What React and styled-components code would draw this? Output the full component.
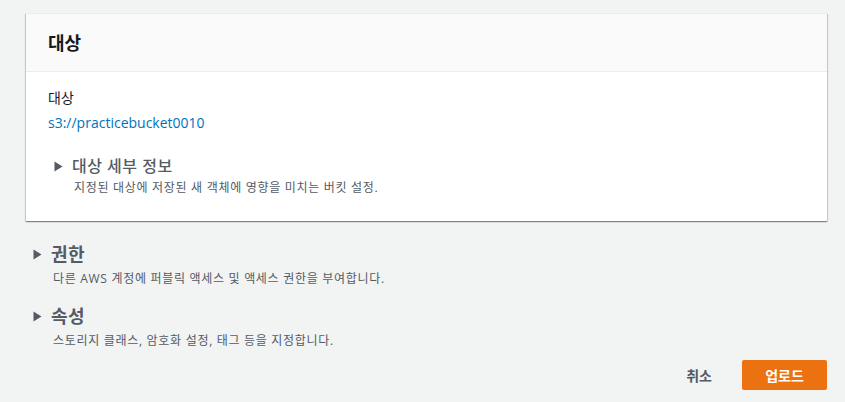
import styled, { createGlobalStyle } from 'styled-components';

const GlobalStyle = createGlobalStyle`
  body {
    margin: 0;
    background: #f2f3f3;
    font-family: "Open Sans", "Noto Sans CJK KR", sans-serif;
    color: #16191f;
  }
`;

const Caret = () => (
  <svg width='9' height='11' viewBox='0 0 9 11'>
    <path d='M0.5 0.5 L8.5 5.5 L0.5 10.5 Z' fill='#545b64' />
  </svg>
);

const App = () => {
  return (
    <Page>
      <GlobalStyle />
      <Card>
        <CardHeader>
          <CardTitle>대상</CardTitle>
        </CardHeader>
        <CardBody>
          <Label>대상</Label>
          <Link>s3://practicebucket0010</Link>
          <Expander $inset>
            <ExpanderHead>
              <Caret />
              <ExpanderTitle $size={16} $weight={500}>대상 세부 정보</ExpanderTitle>
            </ExpanderHead>
            <Description $gap={3}>지정된 대상에 저장된 새 객체에 영향을 미치는 버킷 설정.</Description>
          </Expander>
        </CardBody>
      </Card>

      <Sections>
        <Expander>
          <ExpanderHead>
            <Caret />
            <ExpanderTitle $size={18} $weight={700}>권한</ExpanderTitle>
          </ExpanderHead>
          <Description $gap={6}>다른 AWS 계정에 퍼블릭 액세스 및 액세스 권한을 부여합니다.</Description>
        </Expander>
        <Expander>
          <ExpanderHead>
            <Caret />
            <ExpanderTitle $size={18} $weight={700}>속성</ExpanderTitle>
          </ExpanderHead>
          <Description $gap={6}>스토리지 클래스, 암호화 설정, 태그 등을 지정합니다.</Description>
        </Expander>
      </Sections>

      <Actions>
        <TextButton>취소</TextButton>
        <PrimaryButton>업로드</PrimaryButton>
      </Actions>
    </Page>
  );
};

export default App;

const Page = styled.div`
  width: 845px;
  height: 402px;
  box-sizing: border-box;
  padding: 13px 18px 0 26px;
  overflow: hidden;
`;

const Card = styled.div`
  background: #fff;
  box-shadow: 0 1px 1px 0 rgba(0, 28, 36, 0.3), 1px 1px 1px 0 rgba(0, 28, 36, 0.15),
    -1px 1px 1px 0 rgba(0, 28, 36, 0.15);
  border-top: 1px solid #eaeded;
`;

const CardHeader = styled.div`
  height: 57px;
  display: flex;
  align-items: center;
  padding: 0 22px;
  background: #fafafa;
  border-bottom: 1px solid #eaeded;
`;

const CardTitle = styled.h2`
  margin: 0;
  font-size: 18px;
  font-weight: 700;
  line-height: 22px;
  color: #16191f;
`;

const CardBody = styled.div`
  padding: 15px 22px 25px;
  display: flex;
  flex-direction: column;
`;

const Label = styled.div`
  font-size: 14px;
  line-height: 22px;
  color: #16191f;
`;

const Link = styled.a`
  font-size: 14px;
  line-height: 22px;
  color: #0073bb;
  margin-top: 3px;
  text-decoration: none;
  cursor: pointer;
`;

const Expander = styled.div`
  display: flex;
  flex-direction: column;
  margin-top: ${p => (p.$inset ? '21px' : '0')};
  padding-left: ${p => (p.$inset ? '6px' : '0')};
`;

const ExpanderHead = styled.div`
  display: flex;
  align-items: center;
  gap: 9px;
  height: 22px;
`;

const ExpanderTitle = styled.span`
  font-size: ${p => p.$size}px;
  font-weight: ${p => p.$weight};
  letter-spacing: 0.5px;
  color: #545b64;
  line-height: 22px;
`;

const Description = styled.div`
  font-size: 12px;
  line-height: 16px;
  letter-spacing: 0.7px;
  color: #545b64;
  padding-left: 20px;
  margin-top: ${p => p.$gap}px;
`;

const Sections = styled.div`
  display: flex;
  flex-direction: column;
  gap: 18px;
  padding-left: 7px;
  margin-top: 22px;
`;

const Actions = styled.div`
  display: flex;
  justify-content: flex-end;
  align-items: center;
  gap: 30px;
  margin-top: 11px;
`;

const TextButton = styled.button`
  border: none;
  background: none;
  font-family: inherit;
  font-size: 14px;
  font-weight: 700;
  color: #545b64;
  padding: 0;
  cursor: pointer;
`;

const PrimaryButton = styled.button`
  width: 85px;
  height: 30px;
  border: none;
  border-radius: 2px;
  background: #ec7211;
  color: #fff;
  font-family: inherit;
  font-size: 14px;
  font-weight: 700;
  cursor: pointer;
`;
